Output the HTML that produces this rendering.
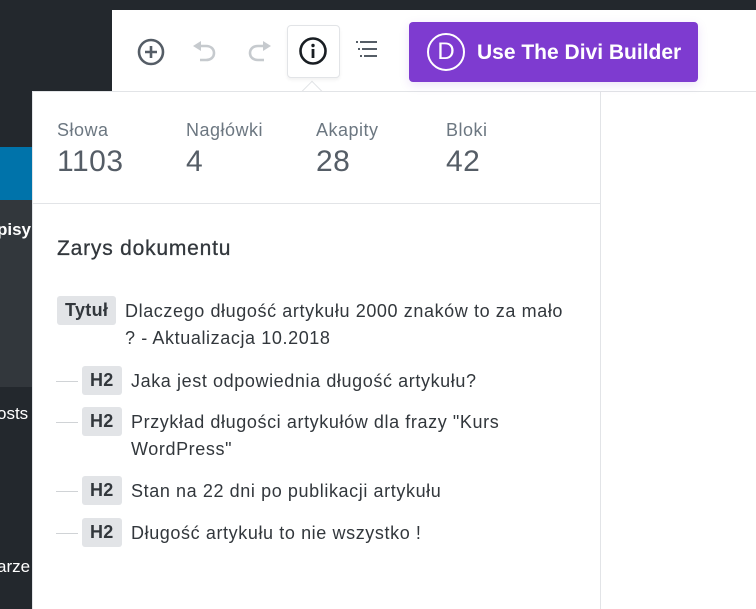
<!DOCTYPE html>
<html style="width:756px;height:609px;overflow:hidden"><head><meta charset="utf-8"><style>
*{margin:0;padding:0;box-sizing:border-box}
html,body{width:756px;height:609px;overflow:hidden}
body{background:#fff;font-family:"Liberation Sans",sans-serif;position:relative}
.side{position:absolute;left:0;top:0;width:112px;height:609px;background:#23282d}
.topdark{position:absolute;left:0;top:0;width:756px;height:10px;background:#23282d}
.blue{position:absolute;left:0;top:147px;width:40px;height:53px;background:#0073aa}
.band{position:absolute;left:0;top:200px;width:40px;height:187px;background:#32373c}
.st{position:absolute;color:#fff;font-size:17px;left:-3px}
.tb{position:absolute;left:112px;top:10px;width:644px;height:82px;background:#fff;border-bottom:1px solid #e2e4e7}
.ic{position:absolute}
.btn{position:absolute;left:409px;top:22px;width:289px;height:60px;background:#7e3bd0;border-radius:4px;color:#fff;font-weight:bold;font-size:21px;box-shadow:0 3px 10px rgba(126,59,208,.15)}
.btn span{position:absolute;left:68px;top:19px}
.dcirc{position:absolute;left:18px;top:11px;width:38px;height:38px;border:2px solid #fff;border-radius:50%;text-align:center;line-height:34px;font-size:24px;font-weight:normal}
.active{position:absolute;left:287px;top:25px;width:53px;height:53px;border:1px solid #e2e4e7;border-radius:4px;background:#fff;box-shadow:0 2px 3px rgba(0,0,0,.06)}
.panel{position:absolute;left:32px;top:91px;width:569px;height:518px;background:#fff;border:1px solid #e2e4e7;border-bottom:none}
.arrow{position:absolute;left:304px;top:84px;width:16px;height:16px;background:#fff;border-left:1px solid #e2e4e7;border-top:1px solid #e2e4e7;transform:rotate(45deg)}
.stat{position:absolute;top:120px;color:#6c7781}
.stat .l{font-size:18px;letter-spacing:.5px}
.stat .n{font-size:30px;color:#555d66;margin-top:4px;letter-spacing:.5px}
.hr{position:absolute;left:33px;top:203px;width:567px;height:1px;background:#e2e4e7}
h3{position:absolute;left:57px;top:237px;font-size:21px;font-weight:normal;color:#32373c;letter-spacing:.8px;-webkit-text-stroke:.3px #32373c}
.row{position:absolute;font-size:18px;color:#32373c;line-height:27px;letter-spacing:.6px}
.tag{display:inline-block;background:#e2e4e7;border-radius:3px;padding:0 8px;font-weight:bold;font-size:18px;line-height:29px;position:absolute;left:0;top:-2px;letter-spacing:.3px}
.dash{position:absolute;left:56px;width:22px;height:1px;background:#d0d3d6}
</style></head><body>
<div class="side"></div>
<div class="topdark"></div>
<div class="blue"></div>
<div class="band"></div>
<div class="st" style="top:220px;font-weight:bold">pisy</div>
<div class="st" style="top:404px">osts</div>
<div class="st" style="top:557px">arze</div>
<div class="tb"></div>
<svg class="ic" style="left:136px;top:37px" width="30" height="30" viewBox="0 0 30 30"><circle cx="15" cy="15" r="12" fill="none" stroke="#555d66" stroke-width="2.6"/><path d="M15 9v12M9 15h12" stroke="#555d66" stroke-width="2.6"/></svg>
<svg class="ic" style="left:190px;top:39px" width="30" height="28" viewBox="0 0 30 28"><path d="M3 7l8-5v10z" fill="#c6cace"/><path d="M9 7h7c5 0 8 3 8 7s-3 7-8 7h-6" fill="none" stroke="#c6cace" stroke-width="2.6"/></svg>
<svg class="ic" style="left:244px;top:39px" width="30" height="28" viewBox="0 0 30 28"><path d="M27 7l-8-5v10z" fill="#c6cace"/><path d="M21 7h-7c-5 0-8 3-8 7s3 7 8 7h6" fill="none" stroke="#c6cace" stroke-width="2.6"/></svg>
<div class="arrow"></div>
<div class="panel"></div>
<div class="active"></div>
<svg class="ic" style="left:298px;top:36px" width="30" height="30" viewBox="0 0 30 30"><circle cx="15" cy="15" r="12.5" fill="none" stroke="#191e23" stroke-width="2.6"/><circle cx="15" cy="9.5" r="1.7" fill="#191e23"/><path d="M15 13v9" stroke="#191e23" stroke-width="2.8"/></svg>
<svg class="ic" style="left:354px;top:40px" width="26" height="22" viewBox="0 0 26 22"><path d="M2 2h2M6 2h17M4 9h2M8 9h15M6 16h2M10 16h13" stroke="#555d66" stroke-width="2"/></svg>
<div class="btn"><div class="dcirc">D</div><span>Use The Divi Builder</span></div>
<div class="stat" style="left:57px"><div class="l">Słowa</div><div class="n">1103</div></div>
<div class="stat" style="left:186px"><div class="l">Nagłówki</div><div class="n">4</div></div>
<div class="stat" style="left:316px"><div class="l">Akapity</div><div class="n">28</div></div>
<div class="stat" style="left:446px"><div class="l">Bloki</div><div class="n">42</div></div>
<div class="hr"></div>
<h3>Zarys dokumentu</h3>
<div class="row" style="left:57px;top:298px;width:540px"><span class="tag">Tytuł</span><div style="padding-left:68px">Dlaczego długość artykułu 2000 znaków to za mało<br>? - Aktualizacja 10.2018</div></div>
<div class="dash" style="top:381px"></div>
<div class="row" style="left:82px;top:368px;width:500px"><span class="tag">H2</span><div style="padding-left:49px">Jaka jest odpowiednia długość artykułu?</div></div>
<div class="dash" style="top:422px"></div>
<div class="row" style="left:82px;top:409px;width:500px"><span class="tag">H2</span><div style="padding-left:49px">Przykład długości artykułów dla frazy "Kurs<br>WordPress"</div></div>
<div class="dash" style="top:491px"></div>
<div class="row" style="left:82px;top:478px;width:500px"><span class="tag">H2</span><div style="padding-left:49px">Stan na 22 dni po publikacji artykułu</div></div>
<div class="dash" style="top:533px"></div>
<div class="row" style="left:82px;top:520px;width:500px"><span class="tag">H2</span><div style="padding-left:49px">Długość artykułu to nie wszystko !</div></div>
</body></html>
